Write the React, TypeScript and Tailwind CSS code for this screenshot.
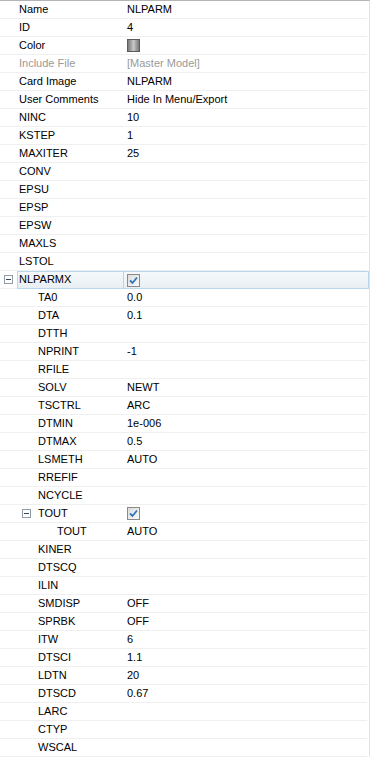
import React from "react";

type Row = {
  label: string;
  value?: string;
  level?: number;
  kind?: "text" | "color" | "check";
  muted?: boolean;
  expander?: boolean;
  selected?: boolean;
};

const rows: Row[] = [
  { label: "Name", value: "NLPARM" },
  { label: "ID", value: "4" },
  { label: "Color", kind: "color" },
  { label: "Include File", value: "[Master Model]", muted: true },
  { label: "Card Image", value: "NLPARM" },
  { label: "User Comments", value: "Hide In Menu/Export" },
  { label: "NINC", value: "10" },
  { label: "KSTEP", value: "1" },
  { label: "MAXITER", value: "25" },
  { label: "CONV" },
  { label: "EPSU" },
  { label: "EPSP" },
  { label: "EPSW" },
  { label: "MAXLS" },
  { label: "LSTOL" },
  { label: "NLPARMX", kind: "check", expander: true, selected: true },
  { label: "TA0", value: "0.0", level: 1 },
  { label: "DTA", value: "0.1", level: 1 },
  { label: "DTTH", level: 1 },
  { label: "NPRINT", value: "-1", level: 1 },
  { label: "RFILE", level: 1 },
  { label: "SOLV", value: "NEWT", level: 1 },
  { label: "TSCTRL", value: "ARC", level: 1 },
  { label: "DTMIN", value: "1e-006", level: 1 },
  { label: "DTMAX", value: "0.5", level: 1 },
  { label: "LSMETH", value: "AUTO", level: 1 },
  { label: "RREFIF", level: 1 },
  { label: "NCYCLE", level: 1 },
  { label: "TOUT", kind: "check", level: 1, expander: true },
  { label: "TOUT", value: "AUTO", level: 2 },
  { label: "KINER", level: 1 },
  { label: "DTSCQ", level: 1 },
  { label: "ILIN", level: 1 },
  { label: "SMDISP", value: "OFF", level: 1 },
  { label: "SPRBK", value: "OFF", level: 1 },
  { label: "ITW", value: "6", level: 1 },
  { label: "DTSCI", value: "1.1", level: 1 },
  { label: "LDTN", value: "20", level: 1 },
  { label: "DTSCD", value: "0.67", level: 1 },
  { label: "LARC", level: 1 },
  { label: "CTYP", level: 1 },
  { label: "WSCAL", level: 1 },
];

function Expander() {
  return (
    <span className="flex h-[9px] w-[9px] items-center justify-center border border-[#8f9ba6] bg-white">
      <span className="h-px w-[5px] bg-[#3c4650]" />
    </span>
  );
}

function CheckBox() {
  return (
    <span className="flex h-[13px] w-[13px] items-center justify-center border border-[#8a8a8a] bg-gradient-to-br from-[#dcdcdc] to-[#fafafa]">
      <svg width="9" height="9" viewBox="0 0 9 9">
        <path d="M1 4.5 L3.5 7 L8 1.5" fill="none" stroke="#2f76b8" strokeWidth="1.8" />
      </svg>
    </span>
  );
}

function ColorSwatch() {
  return (
    <span className="h-[13px] w-[13px] border border-[#5c5c5c] bg-gradient-to-r from-[#7a7a7a] via-[#c8c8c8] to-[#7a7a7a]" />
  );
}

export default function App() {
  return (
    <div className="h-[762px] w-[372px] bg-white font-['Liberation_Sans',Arial,sans-serif] text-[11px] text-black">
      <div className="w-[370px] border-t border-r border-t-[#b4b4b4] border-r-[#e2e2e2]">
        {rows.map((r, i) => {
          const level = r.level ?? 0;
          return (
            <div key={i} className="mr-[2px] flex h-[18px] border-b border-[#efefef]">
              <div className="relative flex w-[123px] shrink-0 items-center">
                {r.expander && (
                  <span className={level === 0 ? "absolute left-[4px] top-[4px]" : "absolute left-[22px] top-[4px]"}>
                    <Expander />
                  </span>
                )}
                {r.selected ? (
                  <div className="ml-[17px] flex h-[18px] flex-1 items-center border border-r-0 border-[#b8d6ee] bg-gradient-to-b from-[#f6f9fb] to-[#e8eff3] pl-[1px]">
                    {r.label}
                  </div>
                ) : (
                  <span
                    className={r.muted ? "text-[#9a9a9a]" : ""}
                    style={{ paddingLeft: 19 + level * 19 }}
                  >
                    {r.label}
                  </span>
                )}
              </div>
              <div
                className={
                  r.selected
                    ? "-mr-[2px] flex h-[18px] flex-1 items-center border border-[#b8d6ee] bg-gradient-to-b from-[#f6f9fb] to-[#e8eff3] pl-[3px]"
                    : "flex flex-1 items-center pl-[4px]"
                }
              >
                {r.kind === "check" ? (
                  <CheckBox />
                ) : r.kind === "color" ? (
                  <ColorSwatch />
                ) : (
                  <span className={r.muted ? "text-[#9a9a9a]" : ""}>{r.value}</span>
                )}
              </div>
            </div>
          );
        })}
      </div>
    </div>
  );
}
